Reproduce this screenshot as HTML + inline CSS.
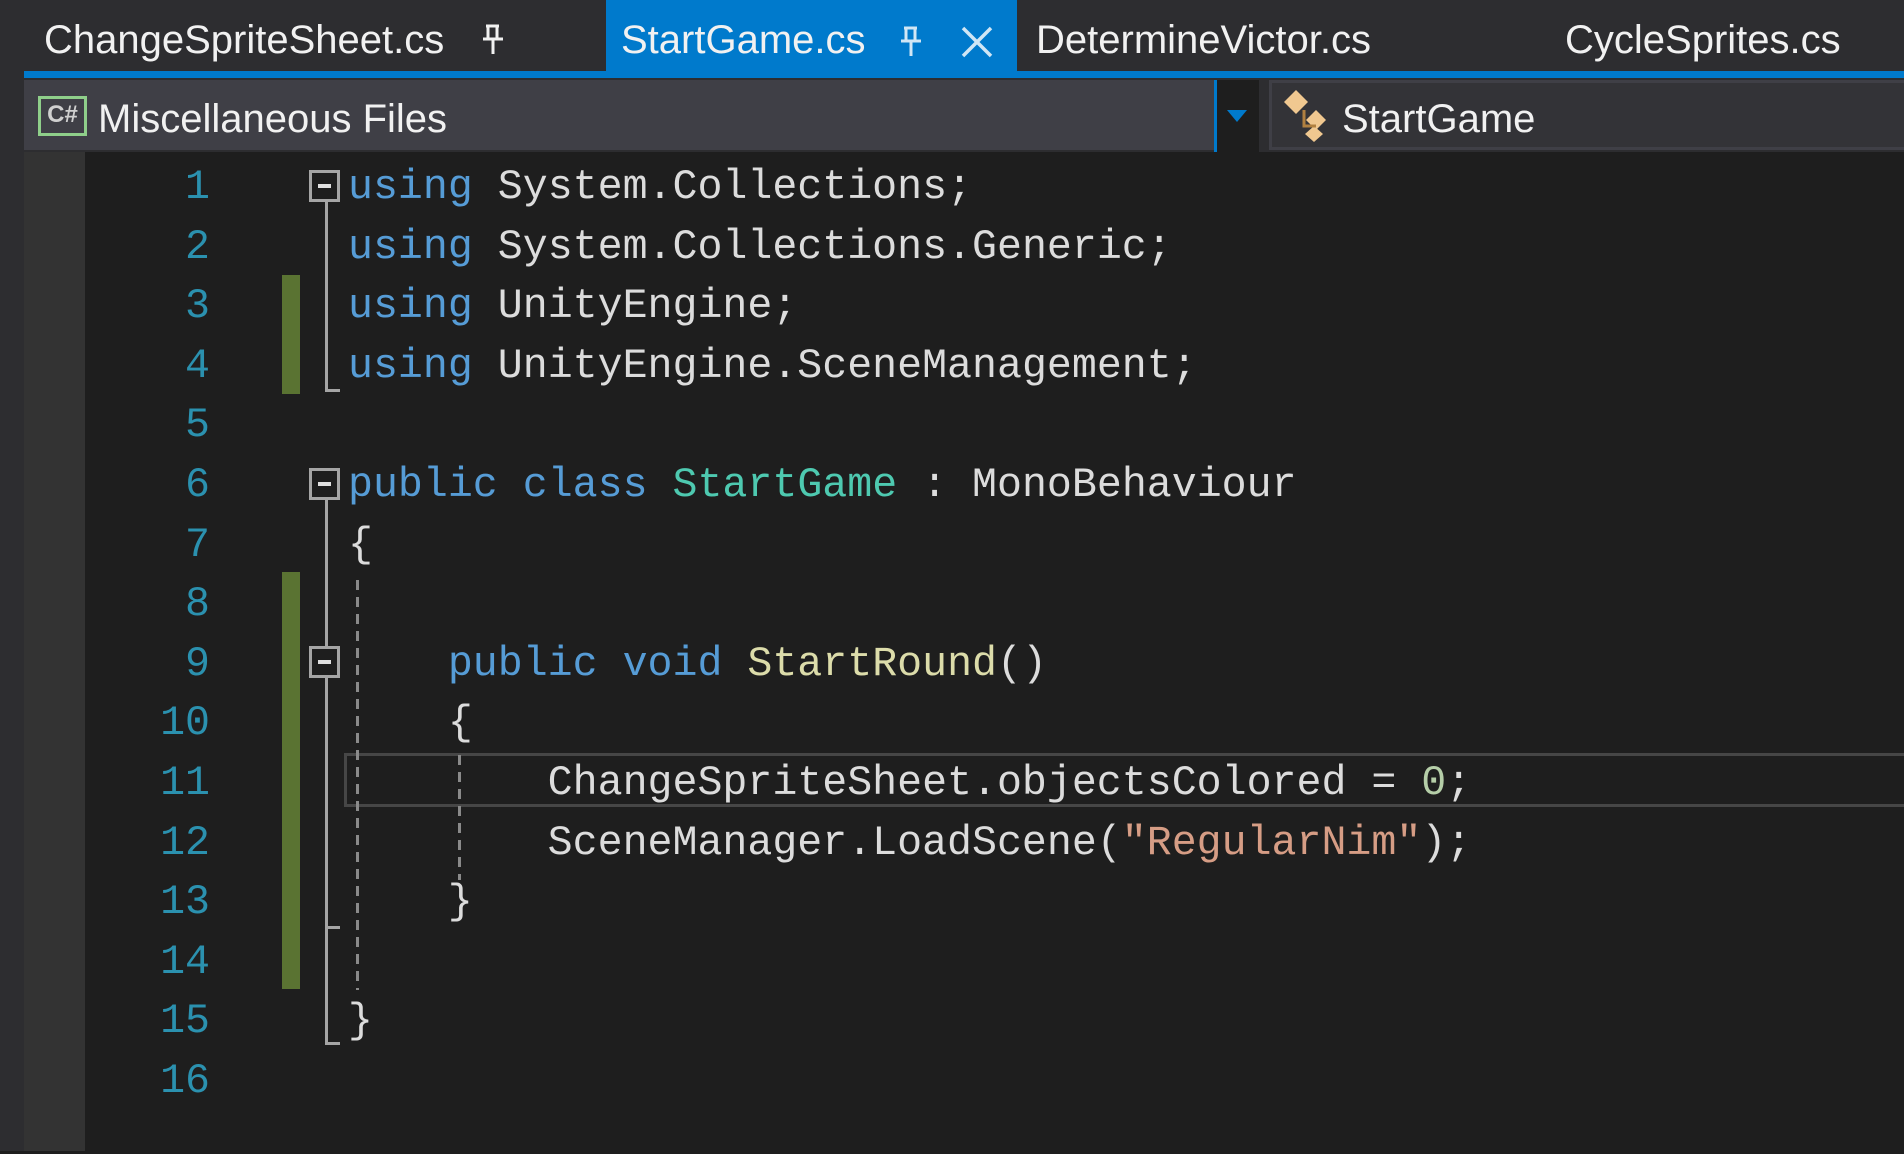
<!DOCTYPE html>
<html><head><meta charset="utf-8"><style>
*{margin:0;padding:0;box-sizing:border-box}
body{width:1904px;height:1151px;overflow:hidden;background:#1e1e1e;position:relative;font-family:"Liberation Sans",sans-serif}
.a{position:absolute}
.tab{position:absolute;top:0;height:71px;color:#f1f1f1;font-size:40px;line-height:80px;white-space:nowrap}
.code{position:absolute;left:348px;font-family:"Liberation Mono",monospace;font-size:41.6px;color:#dcdcdc;white-space:pre;line-height:59.6px;height:59.6px}
.ln{position:absolute;left:120px;width:90px;text-align:right;font-family:"Liberation Mono",monospace;font-size:41.6px;color:#2b91af;line-height:59.6px}
.k{color:#569cd6}.t{color:#4ec9b0}.m{color:#dcdcaa}.s{color:#d69d85}.n{color:#b5cea8}
.fb{position:absolute;left:309px;width:31px;height:32px;border:3px solid #a5a5a5;background:#1e1e1e}
.fb::after{content:"";position:absolute;left:6px;top:11px;width:13px;height:4px;background:#e0e0e0}
.vl{position:absolute;width:3px;background:#a5a5a5}
.hl{position:absolute;height:3px;background:#a5a5a5}
.dash{position:absolute;width:3px;background:repeating-linear-gradient(#8a8a8a 0 10px,transparent 10px 17px)}
.g{position:absolute;left:282px;width:18px;background:#5a7332}
</style></head><body>
<div class="a" style="left:0;top:0;width:1904px;height:71px;background:#2d2d30"></div>
<div class="a" style="left:0;top:0;width:24px;height:1151px;background:#2d2d30"></div>
<div class="a" style="left:24px;top:71px;width:1880px;height:7px;background:#007acc"></div>
<div class="a" style="left:606px;top:0;width:411px;height:78px;background:#007acc"></div>
<div class="tab" style="left:44px">ChangeSpriteSheet.cs</div>
<div class="tab" style="left:621px">StartGame.cs</div>
<div class="tab" style="left:1036px">DetermineVictor.cs</div>
<div class="tab" style="left:1565px">CycleSprites.cs</div>
<svg class="a" style="left:480px;top:24px" width="26" height="32"><path d="M6 2h13M8 2v13M17 2v13M3 15h20M13 15v15" stroke="#f1f1f1" stroke-width="3" fill="none"/></svg>
<svg class="a" style="left:898px;top:26px" width="26" height="32"><path d="M6 2h13M8 2v13M17 2v13M3 15h20M13 15v15" stroke="#d0e6f5" stroke-width="3" fill="none"/></svg>
<svg class="a" style="left:960px;top:26px" width="34" height="32"><path d="M3 2L31 30M31 2L3 30" stroke="#d0e6f5" stroke-width="3.5"/></svg>
<div class="a" style="left:24px;top:78px;width:1880px;height:74px;background:#2d2d30"></div>
<div class="a" style="left:24px;top:80px;width:1190px;height:70px;background:#3f3f46"></div>
<div class="a" style="left:1214px;top:80px;width:45px;height:72px;background:#1e1e1e;border-left:3px solid #007acc"></div>
<svg class="a" style="left:1227px;top:110px" width="20" height="14"><path d="M0 0h20L10 12z" fill="#007acc"/></svg>
<div class="a" style="left:1269px;top:80px;width:640px;height:70px;background:#333337;border:3px solid #3f3f46"></div>
<div class="a" style="left:38px;top:96px;width:49px;height:40px;border:3px solid #8fcf8a;color:#d0d0d0;font-size:24px;font-weight:bold;line-height:32px;text-align:center">C#</div>
<div class="a" style="left:98px;top:86px;color:#f1f1f1;font-size:40px;line-height:66px">Miscellaneous Files</div>
<svg class="a" style="left:1282px;top:88px" width="52" height="56"><path d="M14 2l12 12-12 12L2 14z" fill="#f0c890"/><path d="M34 22l10 10-10 10-10-10z" fill="#f0c890"/><path d="M32 38l9 8-9 8-9-8z" fill="#f0c890"/><path d="M22 22v16h12" stroke="#b08040" stroke-width="3" fill="none"/></svg>
<div class="a" style="left:1342px;top:86px;color:#f1f1f1;font-size:40px;line-height:66px">StartGame</div>
<div class="a" style="left:24px;top:152px;width:61px;height:999px;background:#333333"></div>
<div class="a" style="left:344px;top:753px;width:1570px;height:54px;border:3px solid #464646"></div>
<div class="g" style="top:275px;height:119px"></div>
<div class="g" style="top:572px;height:417px"></div>
<div class="vl" style="left:325px;top:202px;height:190px"></div><div class="hl" style="left:325px;top:389px;width:15px"></div>
<div class="vl" style="left:325px;top:500px;height:545px"></div><div class="hl" style="left:325px;top:1042px;width:15px"></div>
<div class="hl" style="left:325px;top:926px;width:15px"></div>
<div class="fb" style="top:170px"></div>
<div class="fb" style="top:468px"></div>
<div class="fb" style="top:646px"></div>
<div class="dash" style="left:356px;top:580px;height:410px"></div>
<div class="dash" style="left:458px;top:755px;height:125px"></div>
<div style="position:absolute;left:0;top:3px;width:1904px;height:1151px">
<div class="ln" style="top:155px">1</div>
<div class="ln" style="top:214.6px">2</div>
<div class="ln" style="top:274.2px">3</div>
<div class="ln" style="top:333.8px">4</div>
<div class="ln" style="top:393.4px">5</div>
<div class="ln" style="top:453px">6</div>
<div class="ln" style="top:512.6px">7</div>
<div class="ln" style="top:572.2px">8</div>
<div class="ln" style="top:631.8px">9</div>
<div class="ln" style="top:691.4px">10</div>
<div class="ln" style="top:751px">11</div>
<div class="ln" style="top:810.6px">12</div>
<div class="ln" style="top:870.2px">13</div>
<div class="ln" style="top:929.8px">14</div>
<div class="ln" style="top:989.4px">15</div>
<div class="ln" style="top:1049px">16</div>
<div class="code" style="top:155px"><span class="k">using</span> System.Collections;</div>
<div class="code" style="top:214.6px"><span class="k">using</span> System.Collections.Generic;</div>
<div class="code" style="top:274.2px"><span class="k">using</span> UnityEngine;</div>
<div class="code" style="top:333.8px"><span class="k">using</span> UnityEngine.SceneManagement;</div>
<div class="code" style="top:453px"><span class="k">public</span> <span class="k">class</span> <span class="t">StartGame</span> : MonoBehaviour</div>
<div class="code" style="top:512.6px">{</div>
<div class="code" style="top:631.8px">    <span class="k">public</span> <span class="k">void</span> <span class="m">StartRound</span>()</div>
<div class="code" style="top:691.4px">    {</div>
<div class="code" style="top:751px">        ChangeSpriteSheet.objectsColored = <span class="n">0</span>;</div>
<div class="code" style="top:810.6px">        SceneManager.LoadScene(<span class="s">"RegularNim"</span>);</div>
<div class="code" style="top:870.2px">    }</div>
<div class="code" style="top:989.4px">}</div>
</div>
</body></html>
